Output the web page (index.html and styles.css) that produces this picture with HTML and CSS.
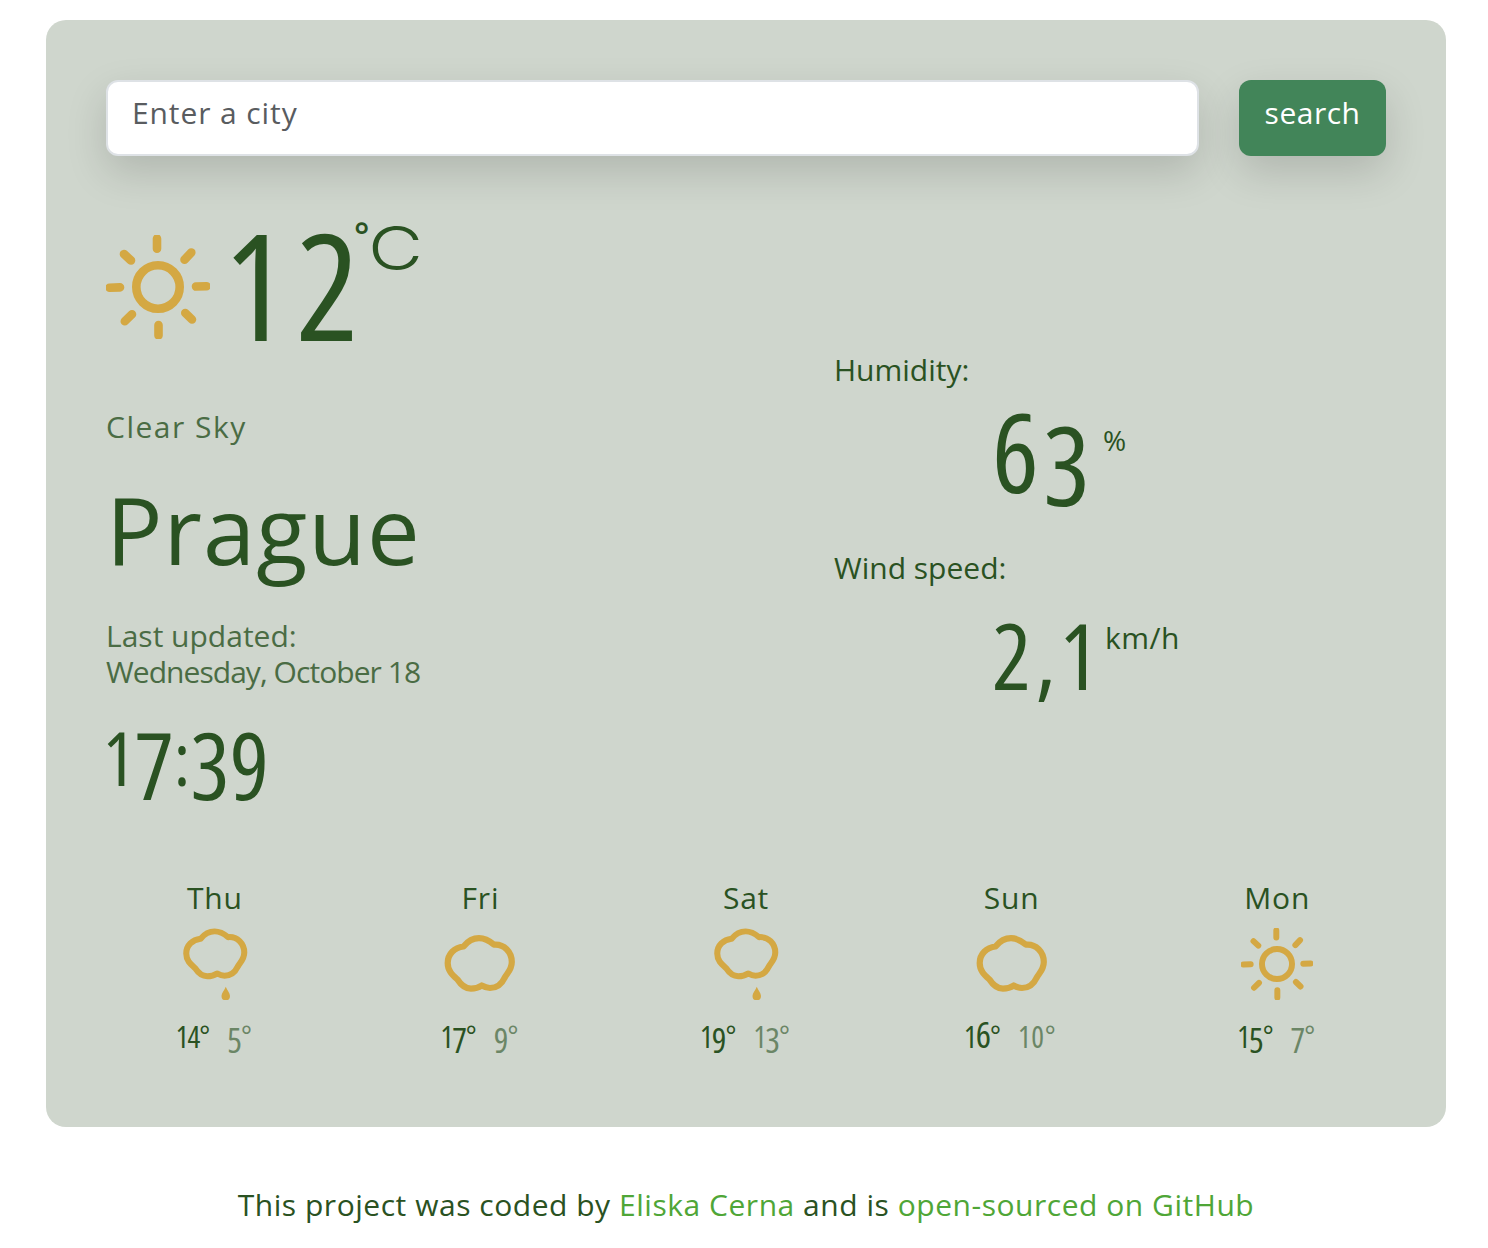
FILE: index.html
```html
<!DOCTYPE html>
<html lang="en">
<head>
<meta charset="utf-8">
<title>Weather in Prague</title>
<link rel="stylesheet" href="styles.css">
</head>
<body>
<svg class="sprite" aria-hidden="true">
  <symbol id="sun" viewBox="0 0 104 104">
    <g fill="none" stroke="currentColor" stroke-width="8.6" stroke-linecap="round">
      <circle cx="52" cy="52" r="21.7"/>
      <path d="M51 3.5V13.8M52.5 90V100.5M3.5 52.7L14 52.4M90 51.5L100.500 51.2M18 19L25 25.500M85.300 17.500L78.500 24.700M18.800 86.300L26 79.200M79.300 78L86 84.500"/>
    </g>
  </symbol>
  <symbol id="cloud" viewBox="0 0 72 72">
    <path fill="none" stroke="currentColor" stroke-width="6.2" stroke-linejoin="round" d="M19.500 18.500C24 13 29 10.200 35 10.200C41 10.200 45 12.500 50 16.700C60 15.800 67.800 24 67.800 34C67.800 42 63 45 60.500 50C57.500 56.500 53 60 46 60C43 60 40.500 59 37.700 57.500C34 60 31 60.700 27 60.700C20.500 60.500 17 57 13.500 51.500C8.500 47 3.700 43 3.700 35C3.700 26 10.500 19.500 19.500 18.500Z"/>
  </symbol>
  <symbol id="rain" viewBox="0 0 72 72">
    <path fill="none" stroke="currentColor" stroke-width="6.700" stroke-linejoin="round" transform="translate(3.900 -5.700) scale(.905 .89)" d="M19.500 18.500C24 13 29 10.200 35 10.200C41 10.200 45 12.500 50 16.700C60 15.800 67.800 24 67.800 34C67.800 42 63 45 60.500 50C57.500 56.500 53 60 46 60C43 60 40.500 59 37.700 57.500C34 60 31 60.700 27 60.700C20.500 60.500 17 57 13.500 51.500C8.500 47 3.700 43 3.700 35C3.700 26 10.500 19.500 19.500 18.500Z"/>
    <path fill="currentColor" d="M46.800 58.700C48 62 51 65 51 68C51 70.500 49.500 72 48.500 72H45C43.800 72 42.500 70.500 42.500 68C42.500 65 45.500 62 46.800 58.700Z"/>
  </symbol>
</svg>

<main class="card">
  <form class="search">
    <input class="search-input" type="text" placeholder="Enter a city">
    <button class="search-button" type="button">search</button>
  </form>

  <div class="weather">
    <section class="current">
      <div class="reading">
        <svg class="reading-icon"><use href="#sun"/></svg>
        <span class="temperature">12</span>
        <span class="unit"><span class="degree">°</span><span class="celsius">C</span></span>
      </div>
      <p class="description">Clear Sky</p>
      <h1 class="city">Prague</h1>
      <p class="updated">Last updated:<br><span class="date">Wednesday, October 18</span></p>
      <p class="time">1<span class="low">7</span>:<span class="low">39</span></p>
    </section>

    <section class="details">
      <p class="label">Humidity:</p>
      <div class="value humidity"><span class="number"><span class="tall">6</span><span class="low">3</span></span><span class="percent">%</span></div>
      <p class="label">Wind speed:</p>
      <div class="value wind"><span class="number">2,1</span><span class="speed">km/h</span></div>
    </section>
  </div>

  <div class="forecast">
    <div class="day">
      <div class="day-name">Thu</div>
      <svg class="day-icon"><use href="#rain"/></svg>
      <div class="range"><span>14°</span><span class="min"><span class="low">5</span>°</span></div>
    </div>
    <div class="day">
      <div class="day-name">Fri</div>
      <svg class="day-icon"><use href="#cloud"/></svg>
      <div class="range"><span>1<span class="low">7</span>°</span><span class="min"><span class="low">9</span>°</span></div>
    </div>
    <div class="day">
      <div class="day-name">Sat</div>
      <svg class="day-icon"><use href="#rain"/></svg>
      <div class="range"><span>1<span class="low">9</span>°</span><span class="min">1<span class="low">3</span>°</span></div>
    </div>
    <div class="day">
      <div class="day-name">Sun</div>
      <svg class="day-icon"><use href="#cloud"/></svg>
      <div class="range"><span>1<span class="tall">6</span>°</span><span class="min wide">10°</span></div>
    </div>
    <div class="day">
      <div class="day-name">Mon</div>
      <svg class="day-icon"><use href="#sun"/></svg>
      <div class="range"><span>1<span class="low">5</span>°</span><span class="min"><span class="low">7</span>°</span></div>
    </div>
  </div>
</main>

<footer class="footer">This project was coded by <a href="#">Eliska Cerna</a> and is <a href="#">open-sourced on GitHub</a></footer>
</body>
</html>
```
FILE: styles.css
```css
* { box-sizing: border-box; }

body {
  margin: 0;
  padding: 20px 42px 0 46px;
  height: 1248px;
  overflow: hidden;
  background: #fff;
  color: #2a5222;
  font: 30px/36px Papyrus, "Open Sans", sans-serif;
}

p, h1 { margin: 0; font-weight: 400; }

.sprite { display: none; }

.card {
  height: 1107px;
  padding: 60px;
  border-radius: 20px;
  background: #cfd6cd;
}

/* Search */
.search { display: flex; gap: 40px; height: 76px; }

.search-input,
.search-button {
  border-radius: 12px;
  font: inherit;
  box-shadow: 0 16px 40px rgba(0, 0, 0, .15);
}

.search-input {
  flex: 1;
  min-width: 0;
  padding: 0 24px 10px;
  border: 2px solid #dee2e6;
  background: #fff;
  letter-spacing: .9px;
}

.search-input::placeholder { color: #595c5f; opacity: 1; }

.search-button {
  width: 147px;
  padding: 0 0 11px;
  border: 0;
  background: #428559;
  color: #fff;
  letter-spacing: .5px;
}

/* Current weather */
.weather { display: grid; grid-template-columns: 728px 1fr; margin-top: 44px; height: 680px; }

.reading { display: flex; height: 159px; }
.reading-icon { width: 104px; height: 104px; margin-top: 35px; color: #d4a843; }

.temperature {
  width: 144px;
  margin: 9px 0 0 14px;
  font-size: 148px;
  line-height: 150px;
  font-stretch: 75%;
  letter-spacing: 9px;
}

.unit { display: flex; margin: 17px 0 0 -14px; font: 300 60px/62px Papyrus, Inter, sans-serif; }
.degree { width: 14px; font: 600 36px/38px Papyrus, "Open Sans", sans-serif; }
.celsius { transform: scaleX(1.26); transform-origin: left; }

.description { margin-top: 50px; letter-spacing: 1.5px; opacity: .8; }
.city { margin-top: 29px; font-size: 94px; line-height: 110px; letter-spacing: 1px; }
.updated { margin-top: 34px; opacity: .8; }
.date { letter-spacing: -.95px; }
.time { margin-top: 28px; margin-left: -3px; font-size: 74px; line-height: 80px; font-stretch: 75%; }

/* Old-style figures: some rise above the cap line, others hang below the baseline */
.low { font-size: 1.25em; line-height: 0; vertical-align: -.15em; font-stretch: 75%; }
.tall { font-size: 1.2em; line-height: 0; font-stretch: 75%; }

.details { padding-top: 152px; }
.value { display: flex; padding-left: 158px; height: 100px; }
.humidity { margin: 20px 0 42px; }
.wind { margin-top: 19px; }
.number { width: 111px; font-size: 92px; line-height: 100px; white-space: nowrap; }
.number .low { margin-left: 4px; font-size: 1.2em; vertical-align: -.12em; }
.wind .number { width: 113px; font-stretch: 75%; letter-spacing: 4px; }
.percent { margin-top: 18px; font-size: 28px; line-height: 28px; }
.speed { margin-top: 15px; letter-spacing: .5px; }

/* Forecast */
.forecast { display: grid; grid-template-columns: repeat(5, 1fr); margin: 0 -24px; text-align: center; }
.day-icon { display: block; width: 72px; height: 72px; margin: 12px auto 19px; color: #d4a843; }
.day-name { letter-spacing: .8px; }
.range { display: flex; justify-content: center; gap: 18px; margin-right: 3px; font-stretch: 75%; letter-spacing: -1px; }
.range .low { font-size: 1.15em; }
.min { opacity: .6; }
.wide { letter-spacing: .6px; }

/* Footer */
.footer { margin-top: 60px; text-align: center; letter-spacing: .53px; white-space: nowrap; }
.footer a { color: #4fa637; text-decoration: none; }
```
